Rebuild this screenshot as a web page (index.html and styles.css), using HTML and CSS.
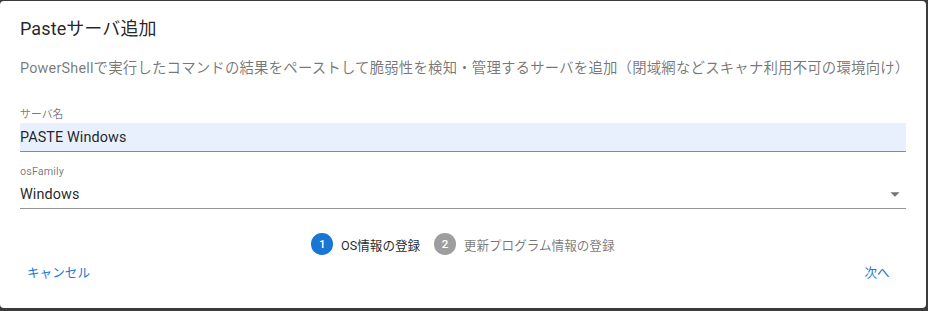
FILE: index.html
```html
<!DOCTYPE html>
<html lang="ja">
<head>
<meta charset="utf-8">
<title>Pasteサーバ追加</title>
<link rel="stylesheet" href="styles.css">
</head>
<body>
<div class="dialog">
  <h2 class="title">Pasteサーバ追加</h2>
  <p class="desc">PowerShellで実行したコマンドの結果をペーストして脆弱性を検知・管理するサーバを追加（閉域網などスキャナ利用不可の環境向け）</p>
  <div class="field">
    <label class="label">サーバ名</label>
    <div class="input autofill">PASTE Windows</div>
  </div>
  <div class="field field2">
    <label class="label">osFamily</label>
    <div class="input select">
      <span>Windows</span>
      <svg class="arrow" viewBox="0 0 24 24" width="22" height="22"><path d="M7 10l5 5 5-5z" fill="rgba(0,0,0,0.54)"/></svg>
    </div>
  </div>
  <div class="stepper">
    <div class="step">
      <span class="circle active">1</span>
      <span class="step-label active-label">OS情報の登録</span>
    </div>
    <div class="step">
      <span class="circle">2</span>
      <span class="step-label">更新プログラム情報の登録</span>
    </div>
  </div>
  <div class="actions">
    <button class="btn">キャンセル</button>
    <button class="btn">次へ</button>
  </div>
</div>
</body>
</html>
```
FILE: styles.css
```css
* { box-sizing: border-box; }
html, body { margin: 0; height: 100%; }
body {
  background: #3b3b3b;
  padding-top: 1px;
  font-family: Roboto, "Noto Sans CJK JP", sans-serif;
  overflow: hidden;
}
.dialog {
  width: 926px;
  height: 307px;
  background: #fff;
  border-radius: 4px;
  padding: 0 20px;
  display: flex;
  flex-direction: column;
}
.title {
  margin: 13px 0 0;
  font-size: 18px;
  font-weight: 400;
  line-height: 29px;
  color: rgba(0,0,0,0.87);
  letter-spacing: 0.1px;
}
.desc {
  margin: 15px 0 0;
  font-size: 14.4px;
  line-height: 21px;
  color: rgba(0,0,0,0.54);
  letter-spacing: 0.2px;
  white-space: nowrap;
}
.field { margin-top: 30px; display: flex; flex-direction: column; }
.field2 { margin-top: 14px; }
.label {
  font-size: 10.8px;
  line-height: 12px;
  color: rgba(0,0,0,0.54);
  letter-spacing: 0.1px;
  margin-bottom: 2px;
}
.input {
  height: 29px;
  border-bottom: 1px solid rgba(0,0,0,0.42);
  font-size: 14.4px;
  color: rgba(0,0,0,0.87);
  display: flex;
  align-items: center;
  letter-spacing: 0.1px;
}
.autofill { background: #e8f0fe; }
.select { justify-content: space-between; }
.stepper {
  margin-top: 24px;
  display: flex;
  justify-content: center;
  align-items: center;
  height: 22px;
}
.step { display: flex; align-items: center; padding: 0 7px; }
.circle {
  width: 21.6px;
  height: 21.6px;
  border-radius: 50%;
  background: rgba(0,0,0,0.38);
  color: #fff;
  font-size: 11.5px;
  font-weight: 500;
  display: flex;
  align-items: center;
  justify-content: center;
}
.circle.active { background: #1976d2; }
.step-label {
  padding-left: 8px;
  font-size: 12.6px;
  color: rgba(0,0,0,0.54);
}
.step-label.active-label { color: rgba(0,0,0,0.87); }
.actions {
  margin-top: 0;
  display: flex;
  justify-content: space-between;
  align-items: center;
}
.btn {
  border: 0;
  background: transparent;
  font-family: inherit;
  font-size: 12.6px;
  color: #1976d2;
  min-width: 58px;
  height: 32px;
  padding: 0 7px;
  cursor: pointer;
}
```
